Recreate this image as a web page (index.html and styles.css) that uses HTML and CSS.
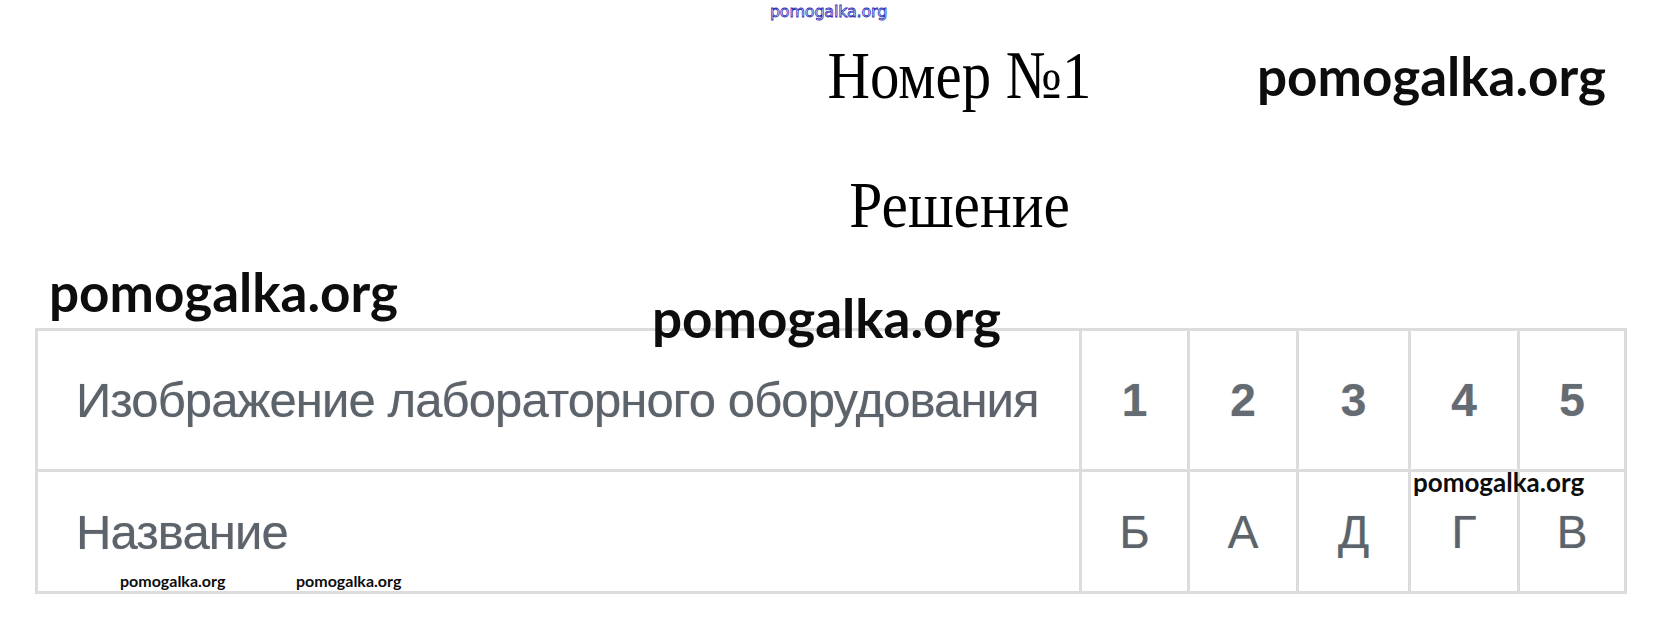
FILE: index.html
```html
<!DOCTYPE html>
<html lang="ru">
<head>
<meta charset="utf-8">
<title>Номер №1</title>
<link rel="stylesheet" href="styles.css">
</head>
<body>
<div class="page">
  <div class="site">pomogalka.org</div>
  <div class="heading"><h1 class="title">Номер №1</h1></div>
  <div class="heading sub"><h2 class="title subtitle">Решение</h2></div>
  <table class="grid">
    <colgroup>
      <col class="c-main"><col class="c1"><col class="c2"><col class="c3"><col class="c4"><col class="c5">
    </colgroup>
    <tr class="row-top">
      <td class="label">Изображение лабораторного оборудования</td>
      <td class="num">1</td><td class="num">2</td><td class="num">3</td><td class="num">4</td><td class="num">5</td>
    </tr>
    <tr class="row-bottom">
      <td class="label">Название</td>
      <td class="ans">Б</td><td class="ans">А</td><td class="ans">Д</td><td class="ans">Г</td><td class="ans">В</td>
    </tr>
  </table>
  <span class="wm wm-big wm-1">pomogalka.org</span>
  <span class="wm wm-big wm-2">pomogalka.org</span>
  <span class="wm wm-big wm-3">pomogalka.org</span>
  <span class="wm wm-mid wm-4">pomogalka.org</span>
  <span class="wm wm-small wm-5">pomogalka.org</span>
  <span class="wm wm-small wm-6">pomogalka.org</span>
</div>
</body>
</html>
```
FILE: styles.css
```css
html, body {
  margin: 0;
  padding: 0;
  background: #ffffff;
}

.page {
  position: relative;
  width: 1657px;
  height: 623px;
  overflow: hidden;
}

.site {
  height: 24px;
  text-align: center;
  font-family: "DejaVu Sans", sans-serif;
  font-size: 16px;
  line-height: 24px;
  color: #ffffff;
  -webkit-text-stroke: 0.8px #2d2db8;
  letter-spacing: -0.2px;
}

.heading {
  padding-left: 262px;
  text-align: center;
  margin-top: 16px;
}

.heading.sub {
  margin-top: 62px;
}

.title {
  display: inline-block;
  margin: 0;
  font-family: "Liberation Serif", "Times New Roman", serif;
  font-weight: normal;
  font-size: 68px;
  line-height: 70px;
  color: #000;
  transform: scaleX(0.865);
}

.subtitle {
  font-size: 66px;
  line-height: 66px;
  transform: scaleX(0.9);
}

.grid {
  margin: 90px 0 0 35px;
  width: 1589px;
  border-collapse: collapse;
  table-layout: fixed;
  border: 3px solid #dcdcdc;
  font-family: "Liberation Sans", Arial, sans-serif;
  color: #5d636b;
}

.grid td {
  border: 3px solid #dcdcdc;
  padding: 0;
}

.c-main { width: 1044px; }
.c1 { width: 108px; }
.c2 { width: 109px; }
.c3 { width: 112px; }
.c4 { width: 109px; }
.c5 { width: 107px; }

.row-top { height: 141px; }
.row-bottom { height: 122px; }

.label {
  padding-left: 38px !important;
  font-size: 49px;
  letter-spacing: -0.9px;
  text-align: left;
  white-space: nowrap;
  text-shadow: 0 0 1px rgba(93, 99, 107, 0.6);
}

.num {
  text-align: center;
  font-size: 46px;
  font-weight: bold;
  color: #656b73;
  text-shadow: 0 0 1px rgba(90, 96, 104, 0.5);
}

.ans {
  text-align: center;
  font-size: 46px;
  text-shadow: 0 0 1px rgba(93, 99, 107, 0.6);
}

.wm {
  position: absolute;
  font-family: Lato, "Open Sans", sans-serif;
  font-weight: bold;
  color: #0d0d0d;
  line-height: 1;
  white-space: nowrap;
}

.wm-big { font-size: 53px; }
.wm-mid { font-size: 26px; }
.wm-small { font-size: 16px; }

.wm-1 { left: 1257px; top: 49px; }
.wm-2 { left: 49px; top: 265px; }
.wm-3 { left: 652px; top: 291px; }
.wm-4 { left: 1413px; top: 469px; }
.wm-5 { left: 120px; top: 573px; }
.wm-6 { left: 296px; top: 573px; }
```
